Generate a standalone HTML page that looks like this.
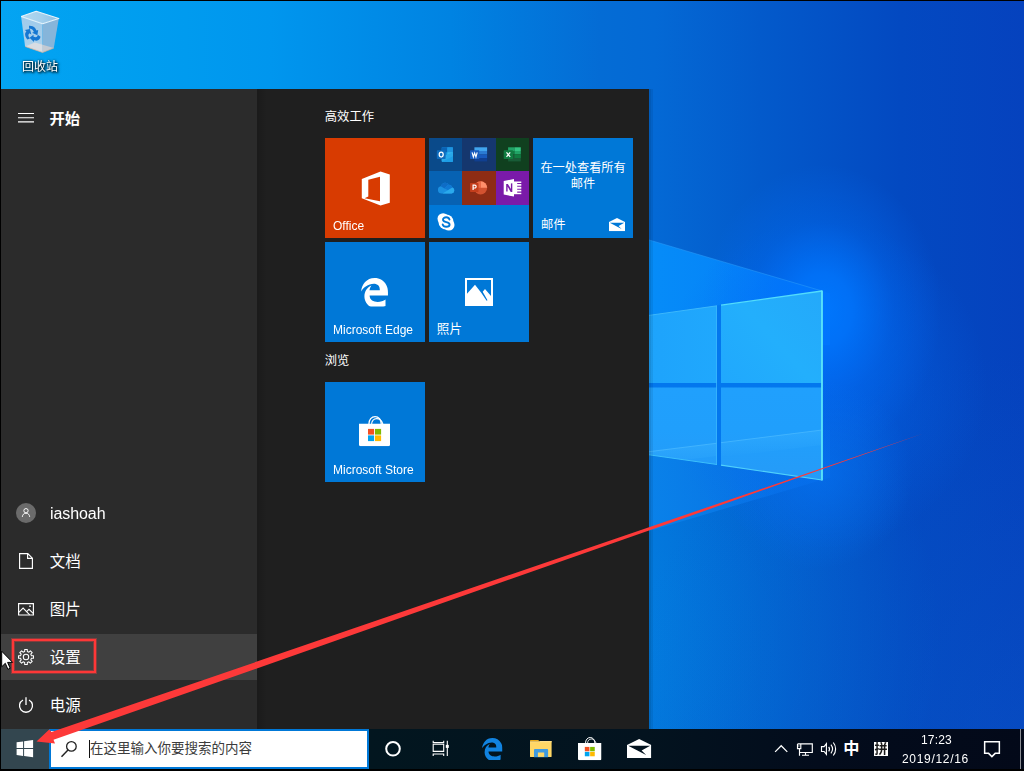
<!DOCTYPE html>
<html lang="zh-CN">
<head>
<meta charset="utf-8">
<title>Windows 10 - 开始</title>
<style>
*{margin:0;padding:0;box-sizing:border-box}
html,body{width:1024px;height:771px;overflow:hidden;background:#000}
body{position:relative;font-family:"Liberation Sans",sans-serif;color:#fff;font-size:12px}
.abs{position:absolute}
#wall{position:absolute;left:0;top:0;width:1024px;height:771px;display:block}
.cj{position:absolute;display:block;color:#fff;white-space:nowrap;overflow:visible;font-family:"Liberation Sans","Noto Sans CJK SC",sans-serif}
.t{position:absolute;white-space:nowrap;color:#fff;will-change:transform}
#menu{position:absolute;left:1px;top:89px;width:648px;height:640px;background:#1f1f1f}
#leftcol{position:absolute;left:0;top:0;width:256px;height:640px;background:#2b2b2b}
#leftshadow{position:absolute;left:256px;top:0;width:10px;height:640px;background:linear-gradient(90deg,rgba(0,0,0,.15),rgba(0,0,0,0))}
#hover{position:absolute;left:0;top:545px;width:256px;height:46px;background:#404040}
.tile{position:absolute;width:100px;height:100px;background:#0078d7;overflow:hidden}
.tile .t{left:8px;bottom:5px;font-size:12px;line-height:14px}
#taskbar{position:absolute;left:0;top:729px;width:1024px;height:40px;background:linear-gradient(90deg,#02171f 0,#02161f 36%,#03131f 63%,#030c1c 80%,#030919 100%)}
#startbtn{position:absolute;left:1px;top:0;width:48px;height:40px;background:#33464f}
#search{position:absolute;left:49px;top:0;width:320px;height:40px;background:#fff;border:2px solid #0078d7}
#bl{position:absolute;left:0;top:0;width:1px;height:771px;background:#000}
#bt{position:absolute;left:0;top:0;width:1024px;height:1px;background:#000}
#bb{position:absolute;left:0;top:769px;width:1024px;height:2px;background:#000}
svg{overflow:visible}
</style>
</head>
<body>

<svg width="0" height="0" style="position:absolute">
<defs>
<symbol id="edge" viewBox="25 7 462 468" preserveAspectRatio="none"><path d="M25.714 228.163c.111-.162.23-.323.342-.485-.021.162-.045.323-.065.485h-.277zm460.572 15.508c0-44.032-7.754-84.465-28.801-122.405C416.498 47.879 343.912 8.001 258.893 8.001 118.962 7.724 40.617 113.214 26.056 227.679c42.429-61.312 117.073-121.376 220.375-124.966 0 0 109.666 0 99.419 104.957H169.997c6.369-37.386 18.554-58.986 34.339-78.926-75.048 34.893-121.85 96.096-120.742 188.315.83 71.448 50.124 144.836 120.743 171.976 83.357 31.847 192.776 7.2 240.132-21.324V363.31c-80.864 56.494-270.871 60.925-272.255-67.572h314.073v-52.067z"/></symbol>
<symbol id="bag" viewBox="0 0 31 30.2" preserveAspectRatio="none">
<path d="M9.9 8.200C9.900 3.600 12.600 .650 16.100 .650S22.300 3.600 22.300 8.200" fill="none" stroke="#fff" stroke-width="1.300"/>
<path d="M12.600 8.200C12.600 4.700 14.900 2.600 17.700 2.600S22.800 4.700 23.900 8.200" fill="none" stroke="#fff" stroke-width="1.100"/>
<path d="M0 7.700H31V28.800Q31 30.200 29.600 30.200H1.400Q0 30.200 0 28.800Z" fill="#fff"/>
<rect x="9" y="12.900" width="6.100" height="5.700" fill="#f25022"/><rect x="16" y="12.900" width="6.100" height="5.700" fill="#7fba00"/>
<rect x="9" y="19.400" width="6.100" height="5.700" fill="#00a4ef"/><rect x="16" y="19.400" width="6.100" height="5.700" fill="#ffb900"/>
</symbol>
<symbol id="mail" viewBox="0 0 24.3 19.1" preserveAspectRatio="none">
<path fill="#fff" fill-rule="evenodd" d="M0 19.100V5.900L12.150 0L24.300 5.900V19.100ZM1.200 6.700H23.200L14.600 11.500L19.100 15.900Z"/>
</symbol>
</defs>
</svg>

<!-- ============ WALLPAPER ============ -->
<svg id="wall" viewBox="0 0 1024 771">
<defs>
<linearGradient id="gbase" x1="0" x2="1024" y1="0" y2="0" gradientUnits="userSpaceOnUse">
<stop offset="0" stop-color="#04a4f2"/><stop offset=".098" stop-color="#00a0f0"/><stop offset=".264" stop-color="#0096ee"/><stop offset=".44" stop-color="#0083e2"/>
<stop offset=".586" stop-color="#046cd5"/><stop offset=".64" stop-color="#0469d5"/><stop offset=".742" stop-color="#035acb"/><stop offset=".88" stop-color="#0349c1"/><stop offset="1" stop-color="#0542be"/>
</linearGradient>
<radialGradient id="glow_ll" cx="560" cy="640" r="380" gradientUnits="userSpaceOnUse">
<stop offset="0" stop-color="#009cf0" stop-opacity=".46"/><stop offset="1" stop-color="#009cf0" stop-opacity="0"/>
</radialGradient>
<radialGradient id="glow_lr" cx="1024" cy="771" r="420" gradientUnits="userSpaceOnUse">
<stop offset="0" stop-color="#0a5cc8" stop-opacity=".35"/><stop offset="1" stop-color="#0a5cc8" stop-opacity="0"/>
</radialGradient>
<radialGradient id="glow_c1" cx="0" cy="0" r="130" gradientUnits="userSpaceOnUse" gradientTransform="translate(822,310) scale(.92,1.12)">
<stop offset="0" stop-color="#0078ff" stop-opacity=".95"/><stop offset=".25" stop-color="#0076ff" stop-opacity=".8"/><stop offset=".6" stop-color="#0070fc" stop-opacity=".3"/><stop offset="1" stop-color="#0070fc" stop-opacity="0"/>
</radialGradient>
<radialGradient id="glow_c2" cx="818" cy="474" r="95" gradientUnits="userSpaceOnUse">
<stop offset="0" stop-color="#0674f4" stop-opacity=".6"/><stop offset="1" stop-color="#0674f4" stop-opacity="0"/>
</radialGradient>
<radialGradient id="glow_m" cx="822" cy="385" r="165" gradientUnits="userSpaceOnUse">
<stop offset="0" stop-color="#0468f0" stop-opacity=".62"/><stop offset="1" stop-color="#0468f0" stop-opacity="0"/>
</radialGradient>
<linearGradient id="gbeamU" x1="649" x2="830" y1="0" y2="0" gradientUnits="userSpaceOnUse">
<stop offset="0" stop-color="#068cf8"/><stop offset=".6" stop-color="#0584fa" stop-opacity=".95"/><stop offset="1" stop-color="#047afc" stop-opacity=".75"/>
</linearGradient>
<linearGradient id="gbeamL" x1="649" x2="830" y1="0" y2="0" gradientUnits="userSpaceOnUse">
<stop offset="0" stop-color="#0a82ea" stop-opacity=".95"/><stop offset=".6" stop-color="#0a78ea" stop-opacity=".7"/><stop offset="1" stop-color="#0a70ea" stop-opacity=".35"/>
</linearGradient>
<linearGradient id="gpaneUL" x1="600" x2="717" y1="0" y2="0" gradientUnits="userSpaceOnUse"><stop offset="0" stop-color="#1ca0fb"/><stop offset="1" stop-color="#20a8fd"/></linearGradient>
<linearGradient id="gpaneUR" x1="721" x2="822" y1="383" y2="291" gradientUnits="userSpaceOnUse"><stop offset="0" stop-color="#20a8fd"/><stop offset=".5" stop-color="#23affc"/><stop offset="1" stop-color="#24a9fa"/></linearGradient>
<linearGradient id="gband" x1="0" x2=".125" y1="0" y2="1"><stop offset="0" stop-color="#3cb2ff" stop-opacity=".9"/><stop offset="1" stop-color="#3cb2ff" stop-opacity="0"/></linearGradient>
<clipPath id="clipLL"><polygon points="600,387.500 717,387.500 717,464.500 600,447.800"/></clipPath>
<linearGradient id="gpaneL" x1="0" x2="0" y1="388" y2="480" gradientUnits="userSpaceOnUse"><stop offset="0" stop-color="#20a0fd"/><stop offset=".45" stop-color="#209ffc"/><stop offset="1" stop-color="#259bf8"/></linearGradient>
</defs>
<rect width="1024" height="771" fill="url(#gbase)"/>
<rect x="180" y="200" width="844" height="571" fill="url(#glow_ll)"/>
<rect x="600" y="350" width="424" height="421" fill="url(#glow_lr)"/>
<!-- light beams -->
<polygon points="830,293.400 560,213.700 560,345 830,345" fill="url(#gbeamU)"/>
<polygon points="830,477.600 560,557.300 560,430 830,430" fill="url(#gbeamL)"/>
<rect x="640" y="200" width="384" height="380" fill="url(#glow_m)"/>
<rect x="680" y="150" width="290" height="320" fill="url(#glow_c1)"/>
<rect x="720" y="375" width="200" height="200" fill="url(#glow_c2)"/>
<line x1="822" y1="291" x2="560" y2="213.700" stroke="#2a9cfa" stroke-width="1" opacity=".55"/>
<!-- window frame (mullion colour) -->
<polygon points="600,322 822,291 822,480 600,448" fill="#0377ee"/>
<!-- panes -->
<polygon points="600,322.300 717,305.800 717,383 600,383" fill="url(#gpaneUL)"/>
<polygon points="721,305.200 822,291 822,383 721,383" fill="url(#gpaneUR)"/>
<polygon points="600,387.500 717,387.500 717,464.500 600,447.800" fill="url(#gpaneL)"/>
<polygon points="721,387.500 822,387.500 822,480 721,465.200" fill="url(#gpaneL)"/>
<!-- reflection band in lower panes -->
<polygon points="600,457.800 717,443.200 717,456 600,470" fill="url(#gband)" opacity=".55" clip-path="url(#clipLL)"/><polyline points="600,457.800 717,443.200" fill="none" stroke="#4cbaff" stroke-width="1" opacity=".7"/>
<polygon points="721,442.700 822,430 822,445 721,457" fill="url(#gband)" opacity=".55"/><polyline points="721,442.700 822,430" fill="none" stroke="#4cbaff" stroke-width="1" opacity=".7"/>
<!-- edge highlights -->
<line x1="716.500" y1="306" x2="716.500" y2="464.400" stroke="#3ab6fd" stroke-width="1" opacity=".8"/>
<polyline points="600,322.300 717,305.800" fill="none" stroke="#3cb8fc" stroke-width="1"/>
<polyline points="721,305.200 822,291" fill="none" stroke="#52dcfb" stroke-width="1.300"/>
<polyline points="822,290.500 822,480.500" fill="none" stroke="#5ce6f9" stroke-width="1.800"/>
<polyline points="822,480 721,465.200" fill="none" stroke="#4fd0fb" stroke-width="1.200"/>
<polyline points="717,464.500 600,447.800" fill="none" stroke="#3cc0fb" stroke-width="1"/>
<!-- menu shadow on wallpaper -->
<rect x="649" y="89" width="4" height="640" fill="#000" opacity=".07"/>
<rect x="649" y="89" width="2" height="640" fill="#000" opacity=".07"/>
</svg>

<!-- ============ DESKTOP ICON ============ -->
<div class="abs" id="recycle" style="left:0;top:0;width:80px;height:80px">
<svg class="abs" style="left:20px;top:9px" width="40" height="45" viewBox="0 0 40 45">
<defs><linearGradient id="gbinT" x1="1" x2="39" y1="0" y2="0" gradientUnits="userSpaceOnUse"><stop offset="0" stop-color="#b3d8f0"/><stop offset=".55" stop-color="#a3cfec"/><stop offset="1" stop-color="#88bee4"/></linearGradient>
<linearGradient id="gbinL" x1="0" x2="0" y1="8" y2="44" gradientUnits="userSpaceOnUse"><stop offset="0" stop-color="#9fcbeb"/><stop offset=".7" stop-color="#a9d0ec"/><stop offset="1" stop-color="#bcd6ea"/></linearGradient></defs>
<polygon points="1.100,7.500 16.200,2.300 38.800,9.500 22.600,14.700" fill="url(#gbinT)"/>
<polygon points="1.100,7.500 22.600,14.700 22.600,43.500 5.100,37.500" fill="url(#gbinL)"/>
<polygon points="22.600,14.700 38.800,9.500 33.800,39.100 22.600,43.500" fill="#86b5da"/>
<polygon points="5.100,37.500 15,33.400 22.600,35.700 22.600,43.500" fill="#d9dde3"/>
<polygon points="22.600,35.700 33.800,39.100 22.600,43.500" fill="#c3cad3"/>
<polyline points="5.100,37.500 22.600,43.500 33.800,39.100" fill="none" stroke="#c9ab95" stroke-width=".7"/>
<polyline points="1.100,7.500 16.200,2.300 38.800,9.500 22.600,14.700 1.100,7.500" fill="none" stroke="#e6f3fb" stroke-width="1.100" stroke-linejoin="round"/>
<g fill="#1577d2" transform="translate(12.300,25) skewY(12)">
<path id="rarrow" d="M-3.300-7.600C-1.300-8.300 1.300-8 2.800-6.600L4.200-4.400L5.900-5.300L5.100.200L-.200-1.200L1.600-2.400L.500-4.200C-.500-5-2-5-3.200-4.500Z"/>
<use href="#rarrow" transform="rotate(120)"/><use href="#rarrow" transform="rotate(240)"/>
</g>
</svg>
<span class="cj " style="left:22px;top:60.5px;width:36px;height:12px;font-size:12px;line-height:12px;filter:drop-shadow(1px 1px 1px rgba(0,0,0,.9)) drop-shadow(0 0 1px rgba(0,0,0,.6));overflow:visible;">回收站</span>
</div>

<!-- ============ START MENU ============ -->
<div id="menu">
<div id="leftcol"></div>
<div id="leftshadow"></div>
<div id="hover"></div>

<!-- hamburger + title -->
<svg class="abs" style="left:17px;top:23.500px" width="16" height="10" viewBox="0 0 16 10"><path d="M0 .5h16M0 4.700h16M0 8.900h16" stroke="#fff" stroke-width="1.150" fill="none"/></svg>
<span class="cj " style="left:48.500px;top:21.800px;width:31px;height:16px;font-size:15.300px;line-height:16px;font-weight:bold;">开始</span>

<!-- left column items -->
<svg class="abs" style="left:15px;top:414px" width="20" height="20" viewBox="0 0 20 20"><circle cx="10" cy="10" r="10" fill="#6b6b6b"/><circle cx="10" cy="7.700" r="2.150" fill="none" stroke="#fff" stroke-width=".950"/><path d="M6.300 13.900c.2-2.300 1.700-3.700 3.700-3.700s3.500 1.400 3.700 3.700" fill="none" stroke="#fff" stroke-width=".950"/></svg>
<span class="t" style="left:49px;top:415px;font-size:16px;line-height:20px;letter-spacing:-.080px">iashoah</span>

<svg class="abs" style="left:18px;top:464px" width="14" height="16" viewBox="0 0 14 16"><path d="M.6.6h8.200l4.600 4.600v10.200h-12.800zM8.600.800v4.600h4.600" fill="none" stroke="#fff" stroke-width="1.15"/></svg>
<span class="cj " style="left:48.800px;top:465.300px;width:31px;height:16px;font-size:15.500px;line-height:16px;">文档</span>

<svg class="abs" style="left:17px;top:514px" width="16" height="13" viewBox="0 0 16 13"><path d="M.6.6h14.800v11.400h-14.800z" fill="none" stroke="#fff" stroke-width="1.15"/><path d="M.8 9.300l4.300-4.200 6.600 6.700M8.600 8.600l2.400-2.300 4.200 4.100" fill="none" stroke="#fff" stroke-width="1.050"/><rect x="11.300" y="2.500" width="1.500" height="1.500" fill="#fff"/></svg>
<span class="cj " style="left:48.800px;top:513.300px;width:31px;height:16px;font-size:15.500px;line-height:16px;">图片</span>

<svg class="abs" style="left:17px;top:560px" width="16" height="16" viewBox="0 0 16 16"><path d="M6.69 2.55 L6.69 0.51 L9.31 0.51 L9.31 2.55 L10.93 3.23 L12.37 1.78 L14.22 3.63 L12.77 5.07 L13.45 6.69 L15.49 6.69 L15.49 9.31 L13.45 9.31 L12.77 10.93 L14.22 12.37 L12.37 14.22 L10.93 12.77 L9.31 13.45 L9.31 15.49 L6.69 15.49 L6.69 13.45 L5.07 12.77 L3.63 14.22 L1.78 12.37 L3.23 10.93 L2.55 9.31 L0.51 9.31 L0.51 6.69 L2.55 6.69 L3.23 5.07 L1.78 3.63 L3.63 1.78 L5.07 3.23Z" fill="none" stroke="#fff" stroke-width="1.050" stroke-linejoin="round"/><circle cx="8" cy="8" r="2.700" fill="none" stroke="#fff" stroke-width="1.050"/></svg>
<span class="cj " style="left:48.800px;top:561.300px;width:31px;height:16px;font-size:15.500px;line-height:16px;">设置</span>

<svg class="abs" style="left:17px;top:607.500px" width="16" height="17" viewBox="0 0 16 17"><path d="M8 .3v7.700" stroke="#fff" stroke-width="1.300" fill="none"/><path d="M5 3a6.500 6.500 0 1 0 6 0" fill="none" stroke="#fff" stroke-width="1.300"/></svg>
<span class="cj " style="left:48.800px;top:609.300px;width:31px;height:16px;font-size:15.500px;line-height:16px;">电源</span>

<!-- red highlight box around 设置 -->
<div class="abs" style="left:11px;top:550px;width:84px;height:34px;border:2px solid #fe3737;box-shadow:0 0 0 1px rgba(254,55,55,.36),inset 0 0 0 1px rgba(254,55,55,.36)"></div>

<!-- group headers -->
<span class="cj " style="left:323.800px;top:21.500px;width:50px;height:13px;font-size:12.300px;line-height:13px;">高效工作</span>
<span class="cj " style="left:323.800px;top:265.500px;width:25px;height:13px;font-size:12.300px;line-height:13px;">浏览</span>

<!-- tiles -->
<div class="tile" style="left:324px;top:49px;background:#d83b01">
<svg class="abs" style="left:0;top:0" width="100" height="100" viewBox="0 0 100 100"><path fill="#fff" fill-rule="evenodd" d="M36.800 41.100L55.500 33.600L64.800 36.400V64.700L55.500 67.500L36.800 60.200ZM43.300 41.700L55 38.700V63.200L39.600 60.300L43.300 58.500Z"/></svg>
<span class="t">Office</span>
</div>

<div class="tile" id="folder" style="left:428px;top:49px">
<div class="abs" style="left:0;top:0;width:33px;height:33px;background:#0a4a8a"></div>
<div class="abs" style="left:33px;top:0;width:34px;height:33px;background:#15376e"></div>
<div class="abs" style="left:67px;top:0;width:33px;height:33px;background:#10401f"></div>
<div class="abs" style="left:0;top:33px;width:33px;height:34px;background:#0762b3"></div>
<div class="abs" style="left:33px;top:33px;width:34px;height:34px;background:#8e2c14"></div>
<div class="abs" style="left:67px;top:33px;width:33px;height:34px;background:#7a1aa9"></div>

<svg class="abs" style="left:0;top:0" width="100" height="100" viewBox="0 0 100 100" font-family="Liberation Sans, sans-serif" font-weight="bold" text-anchor="middle">
<!-- outlook -->
<rect x="12.700" y="9.300" width="11.200" height="14.600" rx=".8" fill="#1490df"/>
<rect x="12.700" y="9.300" width="5.600" height="4.900" fill="#0a63b5"/><rect x="18.300" y="9.300" width="5.600" height="4.900" fill="#1e94e0"/>
<rect x="18.300" y="14.200" width="5.600" height="4.300" fill="#35b8f1"/>
<path d="M12.700 18.500L23.900 14.600V23.100q0 .8-.8.800H13.500q-.8 0-.8-.8Z" fill="#28a8ea"/>
<path d="M12.700 23.900L23.900 18.200V23.100q0 .8-.8.800Z" fill="#1c9be6" opacity=".9"/>
<rect x="7.800" y="12.200" width="8.800" height="8.800" rx=".7" fill="#0f6cbd"/>
<ellipse cx="12.200" cy="16.600" rx="2" ry="2.400" fill="none" stroke="#fff" stroke-width="1.250"/>
<!-- word -->
<rect x="45.400" y="9.300" width="12.700" height="3.700" fill="#41a5ee"/><rect x="45.400" y="13" width="12.700" height="3.500" fill="#2b7cd3"/>
<rect x="45.400" y="16.500" width="12.700" height="3.500" fill="#185abd"/><rect x="45.400" y="20" width="12.700" height="3.400" fill="#103f91"/>
<rect x="41" y="12.200" width="9.300" height="8.800" rx=".7" fill="#185abd"/>
<path d="M43.100 14.300L44.350 18.900L45.650 15L46.950 18.900L48.200 14.300" fill="none" stroke="#fff" stroke-width="1.150" stroke-linejoin="miter"/>
<!-- excel -->
<rect x="79.100" y="9.300" width="6.350" height="3.700" fill="#21a366"/><rect x="85.450" y="9.300" width="6.350" height="3.700" fill="#33c481"/>
<rect x="79.100" y="13" width="6.350" height="3.500" fill="#107c41"/><rect x="85.450" y="13" width="6.350" height="3.500" fill="#21a366"/>
<rect x="79.100" y="16.500" width="12.700" height="3.500" fill="#185c37"/><rect x="85.450" y="16.500" width="6.350" height="3.500" fill="#107c41"/>
<rect x="79.100" y="20" width="12.700" height="3.400" fill="#185c37"/>
<rect x="74.700" y="12.200" width="9.300" height="8.800" rx=".7" fill="#107c41"/>
<path d="M77.500 14.300L81.200 18.900M81.200 14.300L77.500 18.900" fill="none" stroke="#fff" stroke-width="1.250"/>
<!-- onedrive -->
<path d="M12.500 55.600a3.700 3.700 0 0 1-.700-7.300a4.600 4.600 0 0 1 8.300-1.500a4 4 0 0 1 3.300 2.700a3.200 3.200 0 0 1-.800 6.100Z" fill="#1b8fe0"/>
<path d="M11.800 48.300a4.600 4.600 0 0 1 8.300-1.500a4 4 0 0 0-2.700 1.600L15.500 50.600Z" fill="#0e6cc6"/>
<path d="M20.100 46.800a4 4 0 0 1 3.300 2.700L18.900 52.300L15.300 50.300L17.400 48.400a4 4 0 0 1 2.700-1.600Z" fill="#0f78d4"/>
<path d="M23.400 49.500a3.200 3.200 0 0 1-.8 6.100H13.500L18.900 52.300Z" fill="#2aa9ec"/>
<!-- powerpoint -->
<circle cx="51.600" cy="49.800" r="6.600" fill="#d35230"/>
<path d="M51.600 43.200a6.600 6.600 0 0 1 6.600 6.600H51.600Z" fill="#ff8f6b"/>
<path d="M51.600 43.200a6.600 6.600 0 0 0-6.600 6.600H51.600Z" fill="#ed6c47"/>
<rect x="41" y="45.100" width="8.500" height="8.800" rx=".7" fill="#c43e1c"/>
<path d="M44.100 51.900V47.100H45.700A1.450 1.450 0 0 1 45.700 50H44.100" fill="none" stroke="#fff" stroke-width="1.200"/>
<!-- onenote -->
<rect x="84.500" y="43.500" width="7.800" height="12.700" fill="#fff"/>
<path d="M88.200 45.400H93M88.200 48.300H93M88.200 51.200H93M88.200 54.100H93" stroke="#7a1aa9" stroke-width="1.050"/>
<path d="M86 45.800h2.200v8.800H86z" fill="#7a1aa9" opacity=".0"/>
<path d="M74.700 43L85 41V58.600L74.700 56.600Z" fill="#fff"/>
<path d="M77.200 53.400V46.100L78.900 45.900L81.900 51.100V45.500L83.300 45.300V53.900L81.700 54L78.600 48.600V53.500Z" fill="#7a1aa9"/>
<!-- skype -->
<g fill="#fff"><circle cx="17" cy="83.900" r="7.500"/><circle cx="14.100" cy="80.800" r="5.600"/><circle cx="19.900" cy="87" r="5.600"/></g>
<path d="M20.500 81.500C20.100 80.100 18.900 79.300 17.200 79.300C15.300 79.300 14 80.300 14 81.700C14 84.900 20.600 83.300 20.600 86.400C20.600 87.800 19.300 88.700 17.300 88.700C15.500 88.700 14.100 87.900 13.700 86.500" fill="none" stroke="#0078d7" stroke-width="1.900" stroke-linecap="round"/>
</svg>
</div>

<div class="tile" id="mailtile" style="left:532px;top:49px">
<span class="cj " style="left:7.400px;top:23.500px;width:86px;height:13px;font-size:12.200px;line-height:13px;">在一处查看所有</span>
<span class="cj " style="left:37.800px;top:39.500px;width:25px;height:13px;font-size:12.200px;line-height:13px;">邮件</span>
<span class="cj " style="left:8px;top:80.500px;width:25px;height:13px;font-size:12.300px;line-height:13px;">邮件</span>
<svg class="abs" style="left:76px;top:79.800px" width="16" height="13.200"><use href="#mail" width="16" height="13.200"/></svg>
</div>

<div class="tile" style="left:324px;top:153px"><svg class="abs" style="left:36.100px;top:35.700px" width="27" height="28.400" fill="#fff"><use href="#edge" width="27" height="28.400"/></svg><span class="t">Microsoft Edge</span></div>
<div class="tile" style="left:428px;top:153px"><svg class="abs" style="left:0;top:0" width="100" height="100" viewBox="0 0 100 100"><rect x="36" y="36" width="28" height="28" fill="#fff"/><polygon points="38,38 62,38 62,54 56,47 53.700,49.700 58.500,58.300 57.600,58.700 52.400,51 46,42.700 38,51.800" fill="#0078d7"/></svg><span class="cj " style="left:7.800px;top:81px;width:26px;height:13px;font-size:12.600px;line-height:13px;">照片</span></div>
<div class="tile" style="left:324px;top:293px"><svg class="abs" style="left:34px;top:33.800px" width="31" height="30.200"><use href="#bag" width="31" height="30.200"/></svg><span class="t">Microsoft Store</span></div>
</div>

<!-- ============ TASKBAR ============ -->
<div id="taskbar">
<div id="startbtn">
<svg class="abs" style="left:15px;top:10px" width="20" height="20" viewBox="16 739 20 20"><path fill="#fff" d="M16.600 742.300L23.100 741.400V748.100H16.600ZM24.100 741.250L33.100 740.100V748.100H24.100ZM16.600 749.100H23.100V755.900L16.600 755ZM24.100 749.100H33.100V757.200L24.100 756.050Z"/></svg>
</div>
<div id="search">
<svg class="abs" style="left:10px;top:9.500px" width="17" height="17" viewBox="0 0 17 17"><circle cx="10.400" cy="5.400" r="4.800" fill="none" stroke="#222" stroke-width="1.300"/><path d="M7 8.900L.500 15.700" stroke="#222" stroke-width="1.450" fill="none"/></svg>
<div class="abs" style="left:38px;top:9px;width:1px;height:18px;background:#111"></div>
<span class="cj " style="left:39px;top:11px;width:162px;height:14px;font-size:13.500px;line-height:14px;color:#3c3c3c;">在这里输入你要搜索的内容</span>
</div>


<!-- cortana -->
<svg class="abs" style="left:384px;top:11px" width="18" height="18" viewBox="0 0 18 18"><circle cx="9" cy="8.800" r="6.800" fill="none" stroke="#fff" stroke-width="2"/></svg>
<!-- task view -->
<svg class="abs" style="left:432px;top:11px" width="18" height="17" viewBox="0 0 18 17"><path d="M1.200 4.300H11.700V11.400H1.200Z" fill="none" stroke="#fff" stroke-width="1.100"/><path d="M1.200 .700V2.600H11.700V.700M1.200 15.900V14H11.700V15.900" fill="none" stroke="#fff" stroke-width="1.100"/><path d="M15.300 .700V15.900" stroke="#fff" stroke-width="1.100"/><rect x="13.800" y="4.900" width="3" height="3" fill="#fff"/></svg>
<!-- edge -->
<svg class="abs" style="left:481.700px;top:8.800px" width="20.500" height="21.900" fill="#1183e0"><use href="#edge" width="20.500" height="21.900"/></svg>
<!-- explorer -->
<svg class="abs" style="left:530px;top:10px" width="22" height="19" viewBox="0 0 22 19">
<path d="M0 1.600Q0 .900.700.900H7.800Q8.500.900 8.900 1.500L9.600 2.600H0Z" fill="#e8a91a"/>
<path d="M0 2.600H9.600L10.300 1.900H21.300Q21.600 1.900 21.600 2.300V17.600Q21.600 17.900 21.300 17.900H.300Q0 17.900 0 17.600Z" fill="#ffd766"/>
<path d="M0 2.600H9.600L10.300 1.900H21.300Q21.600 1.900 21.600 2.300V3.200H0Z" fill="#ffe08a"/>
<path d="M4 11Q4 10.100 4.900 10.100H17.200Q18.100 10.100 18.100 11V18.200H4Z" fill="#3f9ae0"/>
<rect x="7.900" y="13.500" width="6.300" height="4.400" fill="#ffd766"/>
</svg>
<!-- store -->
<svg class="abs" style="left:577.700px;top:8px" width="23.500" height="23.200"><use href="#bag" width="23.500" height="23.200"/></svg>
<!-- mail -->
<svg class="abs" style="left:626.700px;top:9.700px" width="24.300" height="19.100"><use href="#mail" width="24.300" height="19.100"/></svg>
<!-- tray: chevron, network, volume -->
<svg class="abs" style="left:770px;top:5px" width="72" height="30" viewBox="770 734 72 30" fill="none" stroke="#fff" stroke-width="1.150">
<path d="M775.100 751.900L781.200 745.700L787.300 751.900" stroke-width="1.250"/>
<path d="M797.500 743.900H812.300V752.500H799.500M797.500 743.900V748.600H800.800V743.900M799.500 748.600V755.700M805.500 752.500V755.100M802 755.200H809"/>
<path d="M798.900 745.300v1.400" stroke-width=".8"/>
<path d="M821.500 746.600H824.100L826.400 743.700V754.400L824.100 751.500H821.500Z"/>
<path d="M828.700 746.800A3.800 3.800 0 0 1 828.700 751.300M830.900 744.700A7 7 0 0 1 830.900 753.300M833.300 742.500A10.300 10.300 0 0 1 833.300 755.500"/>
</svg>
<!-- action center -->
<svg class="abs" style="left:983px;top:11px" width="18" height="18" viewBox="983 740 18 18"><path d="M984.650 741.650H999.350V753.350H995.200L991.900 756.600L988.600 753.350H984.650Z" fill="none" stroke="#fff" stroke-width="1.500"/></svg>
<span class="t" style="left:920.500px;top:4px;font-size:12px;line-height:14px;letter-spacing:.150px">17:23</span>
<span class="t" style="left:902px;top:23px;font-size:12px;line-height:14px;letter-spacing:.680px">2019/12/16</span>
<span class="cj " style="left:843.200px;top:10.600px;width:17px;height:17px;font-size:16.200px;line-height:17px;font-weight:bold;">中</span>
<div class="abs" style="left:874px;top:13px;width:14px;height:14px;background:#fff"></div>
<span class="cj " style="left:874.500px;top:13px;width:13px;height:13px;font-size:13px;line-height:13px;color:#1a1a1a;font-weight:bold;">拼</span>
<div class="abs" style="left:1020px;top:0;width:1px;height:40px;background:#8a8d94"></div>
</div>

<!-- ============ RED ARROW ============ -->
<svg class="abs" style="left:0;top:0" width="1024" height="771" viewBox="0 0 1024 771">
<polygon points="36.500,741.500 49.200,729.500 51.500,732 649,527.200 924,433.350 649,530.500 53.500,739.870 55,743.600" fill="#fd3939"/>
</svg>

<!-- mouse cursor -->
<svg class="abs" style="left:1px;top:650px" width="13" height="21" viewBox="0 0 13 21"><path d="M.7 1.200V16.800L4.300 13.300L6.900 19.300L9.200 18.300L6.600 12.400H11.600Z" fill="#fff" stroke="#000" stroke-width="1" stroke-linejoin="miter"/></svg>

<div id="bl"></div><div id="bt"></div><div id="bb"></div>
</body>
</html>
